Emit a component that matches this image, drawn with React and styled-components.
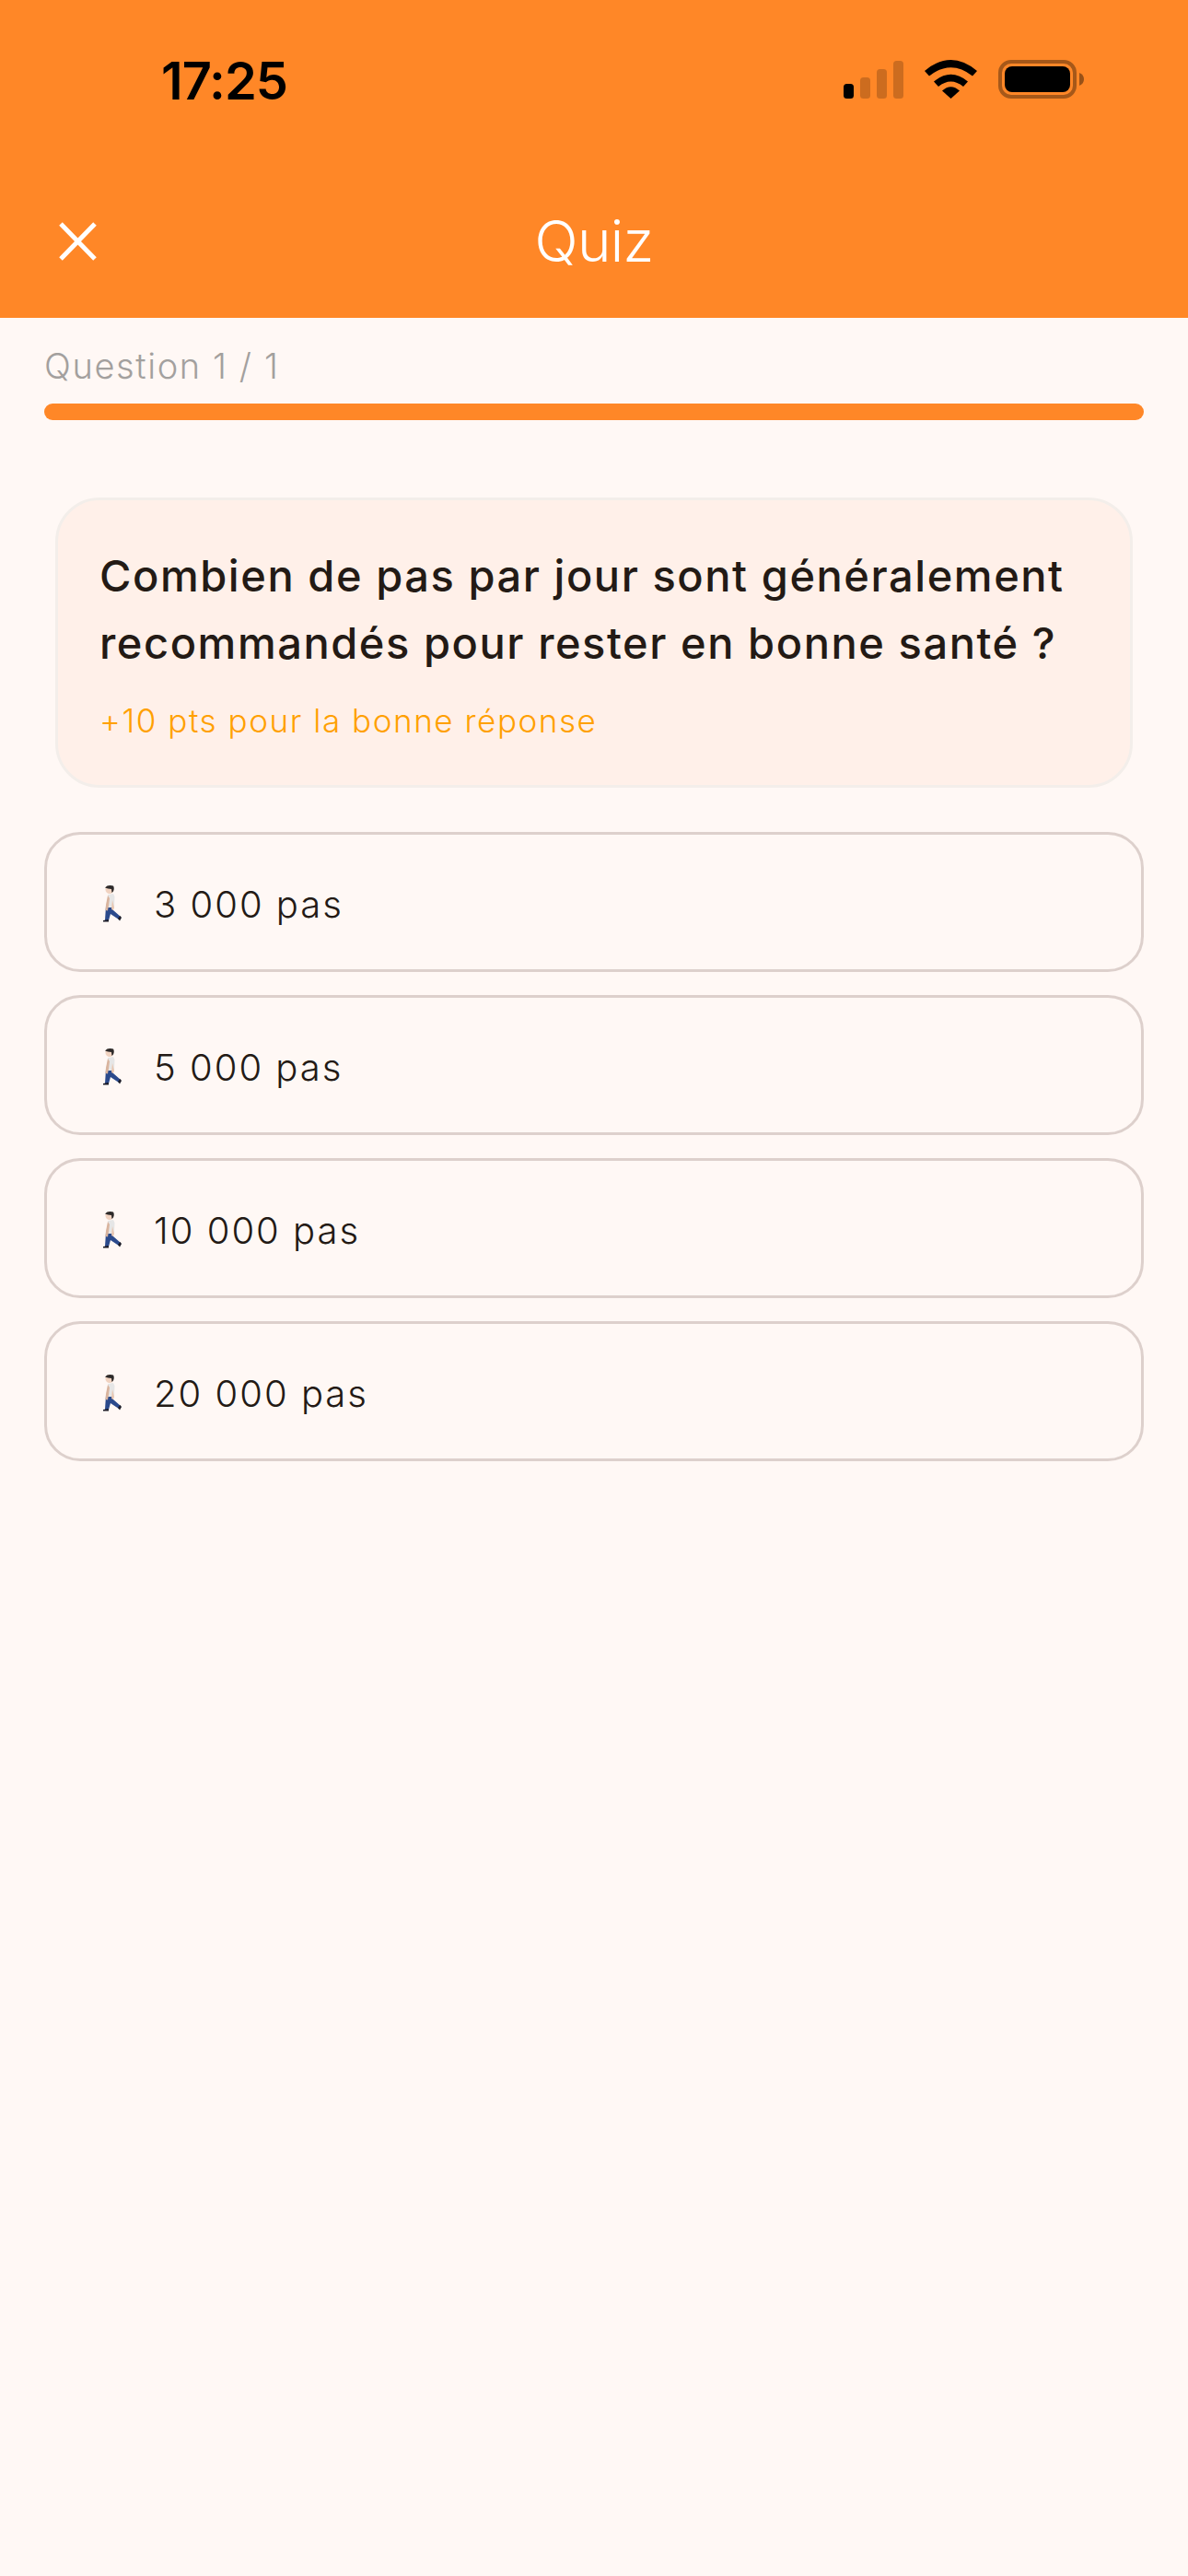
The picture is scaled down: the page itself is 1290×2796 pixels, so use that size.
import React from 'react';
import styled, { createGlobalStyle } from 'styled-components';

const GlobalStyle = createGlobalStyle`
    html, body{
        margin: 0;
        padding: 0;
        background: #FFF8F5;
    }
    *{
        box-sizing: border-box;
    }
`

const Page = styled.div`
    width: 1290px;
    height: 2796px;
    background: #FFF8F5;
    font-family: Inter, "Noto Sans", sans-serif;
    overflow: hidden;
`

const Header = styled.header`
    height: 345px;
    background: #FF8727;
    display: flex;
    flex-direction: column;
`

const StatusBar = styled.div`
    height: 178px;
    padding: 60px 113px 0 175px;
    display: flex;
    justify-content: space-between;
    align-items: flex-start;
`

const Time = styled.div`
    font-size: 56px;
    line-height: 56px;
    font-weight: 600;
    letter-spacing: -1px;
    color: #000;
`

const StatusIcons = styled.div`
    display: flex;
    align-items: center;
    gap: 23px;
    margin-top: 5px;
`

const NavBar = styled.div`
    display: grid;
    grid-template-columns: 1fr auto 1fr;
    align-items: center;
    padding: 0 64px;
    height: 167px;
`

const CloseButton = styled.button`
    width: 41px;
    height: 42px;
    padding: 0;
    border: 0;
    background: none;
    display: block;
`

const Title = styled.h1`
    margin: 0;
    font-size: 62px;
    line-height: 72px;
    font-weight: 340;
    letter-spacing: -0.7px;
    color: #fff;
`

const Content = styled.main`
    padding: 30px 48px 0;
`

const Counter = styled.div`
    font-size: 38px;
    line-height: 45px;
    font-weight: 300;
    letter-spacing: 1.6px;
    color: #A3A09E;
`

const Progress = styled.div`
    height: 18px;
    margin-top: 18px;
    border-radius: 9px;
    background: #FF8727;
`

const QuestionCard = styled.section`
    margin: 84px 12px 0;
    padding: 45px 45px 0;
    height: 315px;
    background: #FFF0E9;
    border: 3px solid #F3EEEA;
    border-radius: 48px;
`

const QuestionText = styled.h2`
    margin: 0;
    font-size: 47px;
    line-height: 73px;
    font-weight: 500;
    letter-spacing: 1.55px;
    color: #231A15;
`

const Points = styled.div`
    margin-top: 27px;
    font-size: 35px;
    line-height: 42px;
    font-weight: 300;
    letter-spacing: 1.55px;
    color: #FFA000;
`

const Options = styled.div`
    margin-top: 48px;
    display: flex;
    flex-direction: column;
    gap: 25px;
`

const Option = styled.button`
    height: 152px;
    width: 100%;
    padding: 4px 0 0 61px;
    display: flex;
    align-items: center;
    gap: 35px;
    background: none;
    border: 3px solid #DDD0CC;
    border-radius: 39px;
    font-family: inherit;
    font-size: 40px;
    font-weight: 350;
    letter-spacing: 2px;
    color: #231A15;
`

const Walker = () => (
    <svg width="20" height="40" viewBox="0 0 20 40">
        <path d="M3 23 L10 23 L11 27 L19 34 L17 37 L8 31 L6 38 L2 38 Z" fill="#2B4A8C" />
        <path d="M0 38 L6 37 L6 39.500 L0 39.500 Z" fill="#1C1C28" />
        <path d="M16 36 L18.500 33 L20 35 L18 38.500 Z" fill="#1C1C28" />
        <path d="M5 10 L11 9 L12.500 12 L12 24 L4 24 L5 16 Z" fill="#E6E6E6" />
        <path d="M5 11 L3 21 L2.500 27 L5 27.500 L6 22 L7 14 Z" fill="#D9B49E" />
        <path d="M10 16 L12 24 L11 27 L9 26 Z" fill="#E9C6B0" />
        <ellipse cx="7" cy="4.500" rx="4.500" ry="4.500" fill="#F1D3C1" />
        <path d="M2 2.500 Q5 -1 11 0.500 Q12.500 3 11 6.500 L9.500 8 L9 4 Q5 3.500 2 2.500 Z" fill="#2D2A2A" />
    </svg>
)

const CloseIcon = () => (
    <svg width="41" height="42" viewBox="0 0 41 42">
        <path d="M2 2 L39 40 M39 2 L2 40" stroke="#fff" strokeWidth="5" fill="none" />
    </svg>
)

const SignalIcon = () => (
    <svg width="65" height="41" viewBox="0 0 65 41">
        <rect x="0" y="25" width="11" height="16" rx="3.500" fill="#000" />
        <rect x="18" y="18" width="11" height="23" rx="3.500" fill="#000" fillOpacity="0.2" />
        <rect x="36" y="9" width="11" height="32" rx="3.500" fill="#000" fillOpacity="0.2" />
        <rect x="54" y="0" width="11" height="41" rx="3.500" fill="#000" fillOpacity="0.2" />
    </svg>
)

const WifiIcon = () => (
    <svg width="57" height="42" viewBox="0 0 57 42">
        <path d="M0 12 Q28.500 -12 57 12 L52 17.500 Q28.500 -1 5 17.500 Z" fill="#000" />
        <path d="M10 23.500 Q28.500 8 47 23.500 L42 29 Q28.500 18 15 29 Z" fill="#000" />
        <path d="M19 33.500 Q28.500 25 38 33.500 L28.500 42 Z" fill="#000" />
    </svg>
)

const BatteryIcon = () => (
    <svg width="93" height="42" viewBox="0 0 93 42">
        <rect x="2" y="2" width="81" height="38" rx="12" fill="none" stroke="#000" strokeOpacity="0.35" strokeWidth="4" />
        <rect x="7" y="7" width="71" height="28" rx="8" fill="#000" />
        <path d="M88 14 Q93 16 93 21 Q93 26 88 28 Z" fill="#000" fillOpacity="0.4" />
    </svg>
)

const answers = ['3 000 pas', '5 000 pas', '10 000 pas', '20 000 pas']

const App = () => {
    return (
        <Page>
            <GlobalStyle />
            <Header>
                <StatusBar>
                    <Time>17:25</Time>
                    <StatusIcons>
                        <SignalIcon />
                        <WifiIcon />
                        <BatteryIcon />
                    </StatusIcons>
                </StatusBar>
                <NavBar>
                    <CloseButton><CloseIcon /></CloseButton>
                    <Title>Quiz</Title>
                </NavBar>
            </Header>
            <Content>
                <Counter>Question 1 / 1</Counter>
                <Progress />
                <QuestionCard>
                    <QuestionText>Combien de pas par jour sont généralement recommandés pour rester en bonne santé ?</QuestionText>
                    <Points>+10 pts pour la bonne réponse</Points>
                </QuestionCard>
                <Options>
                    {answers.map(answer => (
                        <Option key={answer}>
                            <Walker />
                            <span>{answer}</span>
                        </Option>
                    ))}
                </Options>
            </Content>
        </Page>
    )
}

export default App;
